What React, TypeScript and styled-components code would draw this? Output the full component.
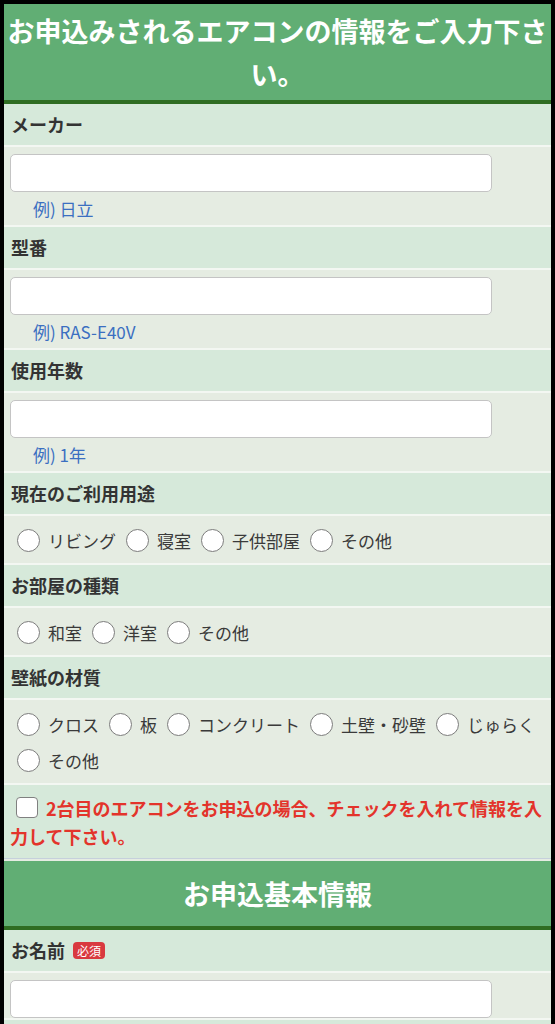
import React from 'react'
import styled, { createGlobalStyle } from 'styled-components'

const GlobalStyle = createGlobalStyle`
  html {
    scrollbar-width: none;
  }
  body {
    margin: 0;
    padding: 4px;
    background: #000;
    font-family: "Noto Sans CJK JP", "Noto Sans", sans-serif;
    color: #333;
  }
`

const Page = styled.div`
  background: #e5ece2;
`

const SectionTitle = styled.h2<{ $pad: number }>`
  margin: 0;
  padding: ${(p) => p.$pad}px 3px;
  background: #61ae74;
  border-bottom: 4px solid #2f6d22;
  color: #fff;
  font-size: 27px;
  font-weight: 700;
  line-height: 43px;
  text-align: center;
`

const Label = styled.div`
  display: flex;
  align-items: center;
  gap: 8px;
  padding: 8px 7px;
  line-height: 25px;
  font-size: 18px;
  font-weight: 700;
  color: #333;
  background: #d6e9da;
  border-bottom: 2px solid #f3f7f2;
`

const Required = styled.span`
  display: inline-block;
  padding: 0 4px;
  height: 17px;
  line-height: 17px;
  border-radius: 4px;
  background: #d9393f;
  color: #fff;
  font-size: 12px;
  font-weight: 400;
`

const Field = styled.div`
  padding: 7px 6px 0;
  background: #e5ece2;
  border-bottom: 2px solid #f3f7f2;
`

const TextInput = styled.input`
  display: block;
  box-sizing: border-box;
  width: 90%;
  height: 38px;
  margin: 0;
  border: 1px solid #c4c4c4;
  border-radius: 5px;
  background: #fff;
`

const Hint = styled.div`
  padding-left: 23px;
  line-height: 33px;
  font-size: 17px;
  color: #3b6fc1;
`

const Choices = styled.div`
  display: flex;
  flex-wrap: wrap;
  column-gap: 10px;
  padding: 6px 2px 5px 13px;
  background: #e5ece2;
  border-bottom: 2px solid #f3f7f2;
`

const Option = styled.label`
  display: flex;
  align-items: center;
  height: 36px;
  font-size: 17px;
  color: #3a3a3a;
  white-space: nowrap;
`

const Radio = styled.input.attrs({ type: 'radio' })`
  appearance: none;
  box-sizing: border-box;
  width: 23px;
  height: 23px;
  margin: 0 8px 0 0;
  border: 1.5px solid #7c7c7c;
  border-radius: 50%;
  background: #fff;
`

const CheckRow = styled.div`
  padding: 9px 6px 8px;
  background: #d6e9da;
  border-bottom: 1px solid #c6d0dc;
  margin-bottom: 2px;
  line-height: 28px;
  font-size: 18px;
  font-weight: 700;
  color: #e3342b;
`

const Check = styled.input.attrs({ type: 'checkbox' })`
  appearance: none;
  box-sizing: border-box;
  width: 22px;
  height: 21px;
  margin: 0 8px 0 6px;
  vertical-align: -2px;
  border: 1.5px solid #808080;
  border-radius: 4px;
  background: #fff;
`

type TextItem = { label: string; hint?: string; required?: boolean }
type ChoiceItem = { label: string; name: string; options: string[] }

const airconText: TextItem[] = [
  { label: 'メーカー', hint: '例) 日立' },
  { label: '型番', hint: '例) RAS-E40V' },
  { label: '使用年数', hint: '例) 1年' },
]

const airconChoices: ChoiceItem[] = [
  { label: '現在のご利用用途', name: 'use', options: ['リビング', '寝室', '子供部屋', 'その他'] },
  { label: 'お部屋の種類', name: 'room', options: ['和室', '洋室', 'その他'] },
  { label: '壁紙の材質', name: 'wall', options: ['クロス', '板', 'コンクリート', '土壁・砂壁', 'じゅらく', 'その他'] },
]

const TextSection = ({ item }: { item: TextItem }) => (
  <>
    <Label>
      {item.label}
      {item.required ? <Required>必須</Required> : null}
    </Label>
    <Field>
      <TextInput type='text' />
      {item.hint ? <Hint>{item.hint}</Hint> : <Hint />}
    </Field>
  </>
)

const ChoiceSection = ({ item }: { item: ChoiceItem }) => (
  <>
    <Label>{item.label}</Label>
    <Choices>
      {item.options.map((o) => (
        <Option key={o}>
          <Radio name={item.name} />
          {o}
        </Option>
      ))}
    </Choices>
  </>
)

const App = () => {
  return (
    <>
      <GlobalStyle />
      <Page>
        <SectionTitle $pad={5}>お申込みされるエアコンの情報をご入力下さい。</SectionTitle>
        {airconText.map((t) => <TextSection key={t.label} item={t} />)}
        {airconChoices.map((c) => <ChoiceSection key={c.name} item={c} />)}
        <CheckRow>
          <Check />
          2台目のエアコンをお申込の場合、チェックを入れて情報を入力して下さい。
        </CheckRow>
        <SectionTitle $pad={11}>お申込基本情報</SectionTitle>
        <TextSection item={{ label: 'お名前', required: true }} />
        <TextSection item={{ label: 'フリガナ', required: true }} />
      </Page>
    </>
  )
}

export default App
